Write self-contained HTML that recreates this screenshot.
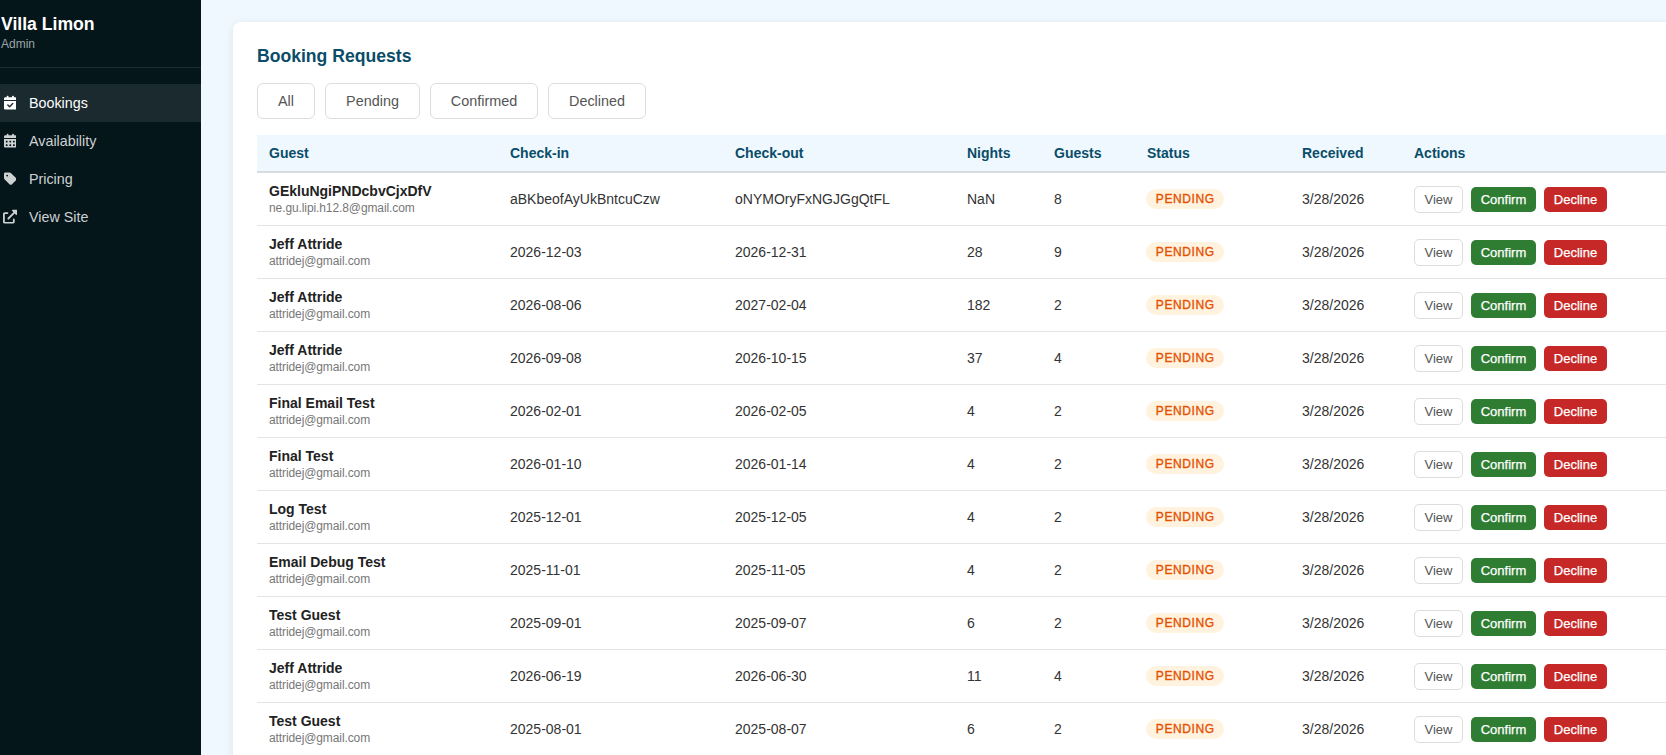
<!DOCTYPE html>
<html><head><meta charset="utf-8"><title>Villa Limon Admin</title>
<style>
*{box-sizing:border-box}
html,body{margin:0;padding:0;overflow:hidden}
body{width:1666px;height:755px;overflow:hidden;position:relative;background:#f0f8ff;font-family:"Liberation Sans",sans-serif;color:#333}
.side{position:absolute;left:0;top:0;width:201px;height:755px;background:#05161b}
.brand{position:absolute;left:1px;top:14px;font-size:17.6px;font-weight:bold;color:#fff;line-height:21px;white-space:nowrap}
.sub{position:absolute;left:1px;top:37px;font-size:12px;color:#9aa4a7;line-height:14px}
.hr{position:absolute;left:0;top:67px;width:201px;height:1px;background:#1e2f34}
.nav{position:absolute;left:0;width:201px;height:38px;color:#cdd1d2;font-size:14.3px;line-height:38px}
.nav.act{background:#1b2a2f;color:#fff}
.nav span{position:absolute;left:29px;top:0;white-space:nowrap}
.ic{position:absolute;top:12px;display:block;transform:translateY(-0.5px)}
.card{position:absolute;left:233px;top:22px;width:1500px;height:800px;background:#fff;border-radius:8px;box-shadow:0 2px 10px rgba(0,0,0,0.08)}
h2{position:absolute;left:257px;top:46px;margin:0;font-size:17.6px;line-height:21px;color:#0a4d68;font-weight:bold;white-space:nowrap}
.tab{position:absolute;top:83px;height:36px;border:1px solid #ddd;border-radius:6px;background:#fff;color:#555;font-size:14.4px;line-height:34px;text-align:center}
table{position:absolute;left:257px;top:135px;border-collapse:separate;border-spacing:0;table-layout:fixed;width:1500px}
th{height:38px;background:#f0f8ff;border-bottom:2px solid #d6dce1;text-align:left;padding:0 12px;font-size:14px;font-weight:bold;color:#0a4d68}
td{height:53px;border-bottom:1px solid #e4e4e4;padding:0 12px;font-size:14px;color:#333;white-space:nowrap;vertical-align:middle}
.nm{font-weight:bold;color:#222;font-size:14px;line-height:16px}
.em{font-size:12px;color:#777;line-height:14px;margin-top:2px;letter-spacing:-0.1px}
.pill{display:inline-block;margin-left:-1px;width:78px;text-align:center;text-indent:0.6px;height:20px;line-height:20px;padding:0;border-radius:10px;background:#fff3e0;color:#e65100;font-size:12px;font-weight:normal;-webkit-text-stroke:0.35px #e65100;letter-spacing:0.6px}
.ac{position:relative}
.b{position:absolute;font-size:13px;text-align:center;border-radius:5px;top:14px;height:25px;line-height:25px;color:#fff;-webkit-text-stroke:0.25px #fff}
.bv{left:12px;width:49px;top:13px;height:27px;border:1px solid #ddd;background:#fff;color:#555;line-height:25px;-webkit-text-stroke:0}
.bc{left:69px;width:65px;background:#2e7d32}
.bd{left:142px;width:63px;background:#c62828}
#app{position:absolute;left:0;top:0;width:1666px;height:755px;overflow:hidden}
</style></head><body>
<div id="app">
<div class="side">
<div class="brand">Villa Limon</div>
<div class="sub">Admin</div>
<div class="hr"></div>
<div class="nav act" style="top:84px"><svg class="ic" viewBox="0 0 448 512" width="12.6" height="14.4" style="left:3.800px"><path fill="currentColor" d="M128 0c17.7 0 32 14.3 32 32V64H288V32c0-17.7 14.3-32 32-32s32 14.3 32 32V64h48c26.5 0 48 21.5 48 48v48H0V112C0 85.5 21.5 64 48 64H96V32c0-17.7 14.3-32 32-32zM0 192H448V464c0 26.5-21.5 48-48 48H48c-26.5 0-48-21.5-48-48V192zM329 305c9.4-9.4 9.4-24.600 0-33.900s-24.600-9.400-33.900 0l-95 95-47-47c-9.400-9.400-24.600-9.400-33.900 0s-9.400 24.600 0 33.900l64 64c9.400 9.400 24.600 9.400 33.900 0L329 305z"/></svg><span>Bookings</span></div>
<div class="nav" style="top:122px"><svg class="ic" viewBox="0 0 448 512" width="12.6" height="14.4" style="left:3.800px"><path fill="currentColor" d="M128 0c17.7 0 32 14.3 32 32V64H288V32c0-17.7 14.3-32 32-32s32 14.3 32 32V64h48c26.500 0 48 21.500 48 48v48H0V112C0 85.500 21.500 64 48 64H96V32c0-17.700 14.300-32 32-32zM0 192H448V464c0 26.500-21.500 48-48 48H48c-26.500 0-48-21.500-48-48V192zm64 80v32c0 8.800 7.200 16 16 16h32c8.800 0 16-7.200 16-16V272c0-8.800-7.200-16-16-16H80c-8.800 0-16 7.200-16 16zm128 0v32c0 8.800 7.200 16 16 16h32c8.800 0 16-7.200 16-16V272c0-8.800-7.200-16-16-16H208c-8.800 0-16 7.200-16 16zm144-16c-8.800 0-16 7.200-16 16v32c0 8.800 7.200 16 16 16h32c8.800 0 16-7.200 16-16V272c0-8.800-7.200-16-16-16H336zM64 400v32c0 8.800 7.200 16 16 16h32c8.800 0 16-7.200 16-16V400c0-8.800-7.200-16-16-16H80c-8.800 0-16 7.200-16 16zm144-16c-8.800 0-16 7.200-16 16v32c0 8.800 7.200 16 16 16h32c8.800 0 16-7.200 16-16V400c0-8.800-7.200-16-16-16H208zm112 16v32c0 8.800 7.200 16 16 16h32c8.800 0 16-7.200 16-16V400c0-8.800-7.200-16-16-16H336c-8.800 0-16 7.200-16 16z"/></svg><span>Availability</span></div>
<div class="nav" style="top:160px"><svg class="ic" viewBox="0 0 448 512" width="12.6" height="14.4" style="left:3.800px"><path fill="currentColor" d="M0 80V229.500c0 17 6.700 33.300 18.700 45.300l176 176c25 25 65.500 25 90.500 0L418.700 317.300c25-25 25-65.500 0-90.500l-176-176c-12-12-28.300-18.700-45.300-18.700H48C21.500 32 0 53.500 0 80zm112 32a32 32 0 1 1 0 64 32 32 0 1 1 0-64z"/></svg><span>Pricing</span></div>
<div class="nav" style="top:198px"><svg class="ic" viewBox="0 0 512 512" width="14.4" height="14.4" style="left:2.900px"><path fill="currentColor" d="M384 320c-17.670 0-32 14.330-32 32v96H64V160h96c17.670 0 32-14.320 32-31.100s-14.330-32-32-32L64 96c-35.350 0-64 28.650-64 64V448c0 35.340 28.650 64 64 64h288c35.350 0 64-28.660 64-64v-96C416 334.300 401.700 320 384 320zM488 0H352c-12.940 0-24.620 7.797-29.560 19.750c-4.969 11.970-2.219 25.720 6.938 34.880L370.800 96L169.400 297.400c-12.500 12.500-12.500 32.750 0 45.250C175.600 348.900 183.800 352 192 352s16.380-3.125 22.620-9.375L416 141.300l41.380 41.380c9.156 9.141 22.880 11.840 34.880 6.938C504.200 184.600 512 172.900 512 160V24C512 10.740 501.300 0 488 0z"/></svg><span>View Site</span></div>
</div>
<div class="card"></div>
<h2>Booking Requests</h2>
<div class="tab" style="left:257px;width:58px">All</div>
<div class="tab" style="left:325px;width:95px">Pending</div>
<div class="tab" style="left:430px;width:108px">Confirmed</div>
<div class="tab" style="left:548px;width:98px">Declined</div>
<table>
<colgroup><col style="width:241px"><col style="width:225px"><col style="width:232px"><col style="width:87px"><col style="width:93px"><col style="width:155px"><col style="width:112px"><col style="width:355px"></colgroup>
<thead><tr><th>Guest</th><th>Check-in</th><th>Check-out</th><th>Nights</th><th>Guests</th><th>Status</th><th>Received</th><th>Actions</th></tr></thead>
<tbody>
<tr><td><div class="nm">GEkluNgiPNDcbvCjxDfV</div><div class="em">ne.gu.lipi.h12.8@gmail.com</div></td><td>aBKbeofAyUkBntcuCzw</td><td>oNYMOryFxNGJGgQtFL</td><td>NaN</td><td>8</td><td><span class="pill">PENDING</span></td><td>3/28/2026</td><td class="ac"><span class="b bv">View</span><span class="b bc">Confirm</span><span class="b bd">Decline</span></td></tr>
<tr><td><div class="nm">Jeff Attride</div><div class="em">attridej@gmail.com</div></td><td>2026-12-03</td><td>2026-12-31</td><td>28</td><td>9</td><td><span class="pill">PENDING</span></td><td>3/28/2026</td><td class="ac"><span class="b bv">View</span><span class="b bc">Confirm</span><span class="b bd">Decline</span></td></tr>
<tr><td><div class="nm">Jeff Attride</div><div class="em">attridej@gmail.com</div></td><td>2026-08-06</td><td>2027-02-04</td><td>182</td><td>2</td><td><span class="pill">PENDING</span></td><td>3/28/2026</td><td class="ac"><span class="b bv">View</span><span class="b bc">Confirm</span><span class="b bd">Decline</span></td></tr>
<tr><td><div class="nm">Jeff Attride</div><div class="em">attridej@gmail.com</div></td><td>2026-09-08</td><td>2026-10-15</td><td>37</td><td>4</td><td><span class="pill">PENDING</span></td><td>3/28/2026</td><td class="ac"><span class="b bv">View</span><span class="b bc">Confirm</span><span class="b bd">Decline</span></td></tr>
<tr><td><div class="nm">Final Email Test</div><div class="em">attridej@gmail.com</div></td><td>2026-02-01</td><td>2026-02-05</td><td>4</td><td>2</td><td><span class="pill">PENDING</span></td><td>3/28/2026</td><td class="ac"><span class="b bv">View</span><span class="b bc">Confirm</span><span class="b bd">Decline</span></td></tr>
<tr><td><div class="nm">Final Test</div><div class="em">attridej@gmail.com</div></td><td>2026-01-10</td><td>2026-01-14</td><td>4</td><td>2</td><td><span class="pill">PENDING</span></td><td>3/28/2026</td><td class="ac"><span class="b bv">View</span><span class="b bc">Confirm</span><span class="b bd">Decline</span></td></tr>
<tr><td><div class="nm">Log Test</div><div class="em">attridej@gmail.com</div></td><td>2025-12-01</td><td>2025-12-05</td><td>4</td><td>2</td><td><span class="pill">PENDING</span></td><td>3/28/2026</td><td class="ac"><span class="b bv">View</span><span class="b bc">Confirm</span><span class="b bd">Decline</span></td></tr>
<tr><td><div class="nm">Email Debug Test</div><div class="em">attridej@gmail.com</div></td><td>2025-11-01</td><td>2025-11-05</td><td>4</td><td>2</td><td><span class="pill">PENDING</span></td><td>3/28/2026</td><td class="ac"><span class="b bv">View</span><span class="b bc">Confirm</span><span class="b bd">Decline</span></td></tr>
<tr><td><div class="nm">Test Guest</div><div class="em">attridej@gmail.com</div></td><td>2025-09-01</td><td>2025-09-07</td><td>6</td><td>2</td><td><span class="pill">PENDING</span></td><td>3/28/2026</td><td class="ac"><span class="b bv">View</span><span class="b bc">Confirm</span><span class="b bd">Decline</span></td></tr>
<tr><td><div class="nm">Jeff Attride</div><div class="em">attridej@gmail.com</div></td><td>2026-06-19</td><td>2026-06-30</td><td>11</td><td>4</td><td><span class="pill">PENDING</span></td><td>3/28/2026</td><td class="ac"><span class="b bv">View</span><span class="b bc">Confirm</span><span class="b bd">Decline</span></td></tr>
<tr><td><div class="nm">Test Guest</div><div class="em">attridej@gmail.com</div></td><td>2025-08-01</td><td>2025-08-07</td><td>6</td><td>2</td><td><span class="pill">PENDING</span></td><td>3/28/2026</td><td class="ac"><span class="b bv">View</span><span class="b bc">Confirm</span><span class="b bd">Decline</span></td></tr>
</tbody></table>
</div>
</body></html>
